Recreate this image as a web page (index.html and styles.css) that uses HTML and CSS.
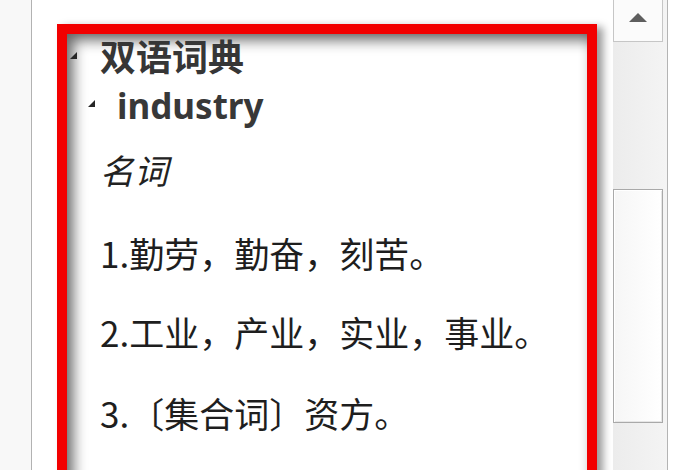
FILE: index.html
```html
<!DOCTYPE html>
<html lang="zh-CN">
<head>
<meta charset="utf-8">
<title>双语词典</title>
<link rel="stylesheet" href="styles.css">
</head>
<body>
<div class="screen">
  <div class="gutter"></div>
  <div class="main">
    <div class="rule"></div>
    <div class="frame">
      <div class="node lvl1">
        <svg class="tri" width="7" height="7" viewBox="0 0 7 7"><polygon points="7,0 7,7 0,7" fill="#262626"/></svg>
        <span class="head">双语词典</span>
      </div>
      <div class="node lvl2">
        <svg class="tri" width="7" height="7" viewBox="0 0 7 7"><polygon points="7,0 7,7 0,7" fill="#262626"/></svg>
        <span class="word">industry</span>
      </div>
      <p class="pos">名词</p>
      <p class="def first">1.勤劳，勤奋，刻苦。</p>
      <p class="def">2.工业，产业，实业，事业。</p>
      <p class="def third">3.〔集合词〕资方。</p>
    </div>
  </div>
  <div class="scroll">
    <div class="btn">
      <svg width="20" height="10" viewBox="0 0 20 10"><polygon points="10,0 19,9 1,9" fill="#5e5e5e"/></svg>
    </div>
    <div class="thumb"></div>
  </div>
  <div class="side"></div>
</div>
</body>
</html>
```

FILE: styles.css
```css
html, body {
  margin: 0;
  padding: 0;
  background: #ffffff;
}

.screen {
  display: flex;
  width: 700px;
  height: 470px;
  overflow: hidden;
  background: #ffffff;
}

.gutter {
  width: 31px;
  flex: none;
  background: #f8f8f8;
  border-right: 1px solid #b2b2b2;
}

.main {
  width: 581px;
  flex: none;
  display: flex;
  flex-direction: column;
}

.rule {
  height: 2px;
  background: #2a2a2a;
  margin: 15px -1px 0 17px;
}

.frame {
  flex: none;
  width: 520px;
  height: 480px;
  margin: 9px 0 0 25px;
  border: 10px solid #f20000;
  background: #ffffff;
  box-shadow:
    inset 10px 10px 14px -4px rgba(0, 0, 0, 0.6),
    inset -4px 0 10px -4px rgba(0, 0, 0, 0.18),
    6px 3px 8px rgba(0, 0, 0, 0.4);
  font-family: "Noto Sans CJK SC", "Noto Sans", sans-serif;
  color: #1e1e1e;
}

.node {
  display: flex;
  align-items: center;
}

.lvl1 {
  height: 42px;
  padding-left: 3px;
}

.lvl1 .head {
  margin-left: 23px;
  font-size: 36px;
  font-weight: 700;
  line-height: 42px;
  color: #363636;
}

.lvl2 {
  height: 46px;
  margin-top: 7px;
  padding-left: 21px;
  align-items: flex-start;
}

.lvl2 .tri {
  margin-top: 17px;
}

.lvl2 .word {
  margin-left: 22px;
  font-family: "Noto Sans", "Open Sans", sans-serif;
  font-size: 35px;
  font-weight: 700;
  line-height: 46px;
  color: #383838;
}

.pos {
  margin: 21px 0 0 33px;
  font-size: 34px;
  font-style: italic;
  line-height: 40px;
  color: #222222;
}

.def {
  margin: 39px 0 0 33px;
  font-size: 35px;
  line-height: 40px;
  white-space: nowrap;
}

.def.first {
  margin-top: 43px;
}

.def.third {
  margin-top: 41px;
}

.scroll {
  width: 50px;
  flex: none;
  padding-right: 4px;
  background: linear-gradient(to right, #ececec, #f4f4f4);
  border-right: 1px solid #b4b4b4;
  display: flex;
  flex-direction: column;
}

.btn {
  height: 43px;
  margin-top: -1px;
  box-sizing: border-box;
  border: 1px solid #c6c6c6;
  background: #fbfbfb;
  display: flex;
  justify-content: center;
  padding-top: 13px;
}

.thumb {
  height: 234px;
  margin-top: 147px;
  box-sizing: border-box;
  border: 1px solid #a9a9a9;
  box-shadow: inset 1px 1px 0 #ffffff, inset -1px -1px 0 #e6e6e6;
  background: linear-gradient(to right, #f6f6f6, #ffffff);
}

.side {
  flex: 1;
  background: #ffffff;
}
```
